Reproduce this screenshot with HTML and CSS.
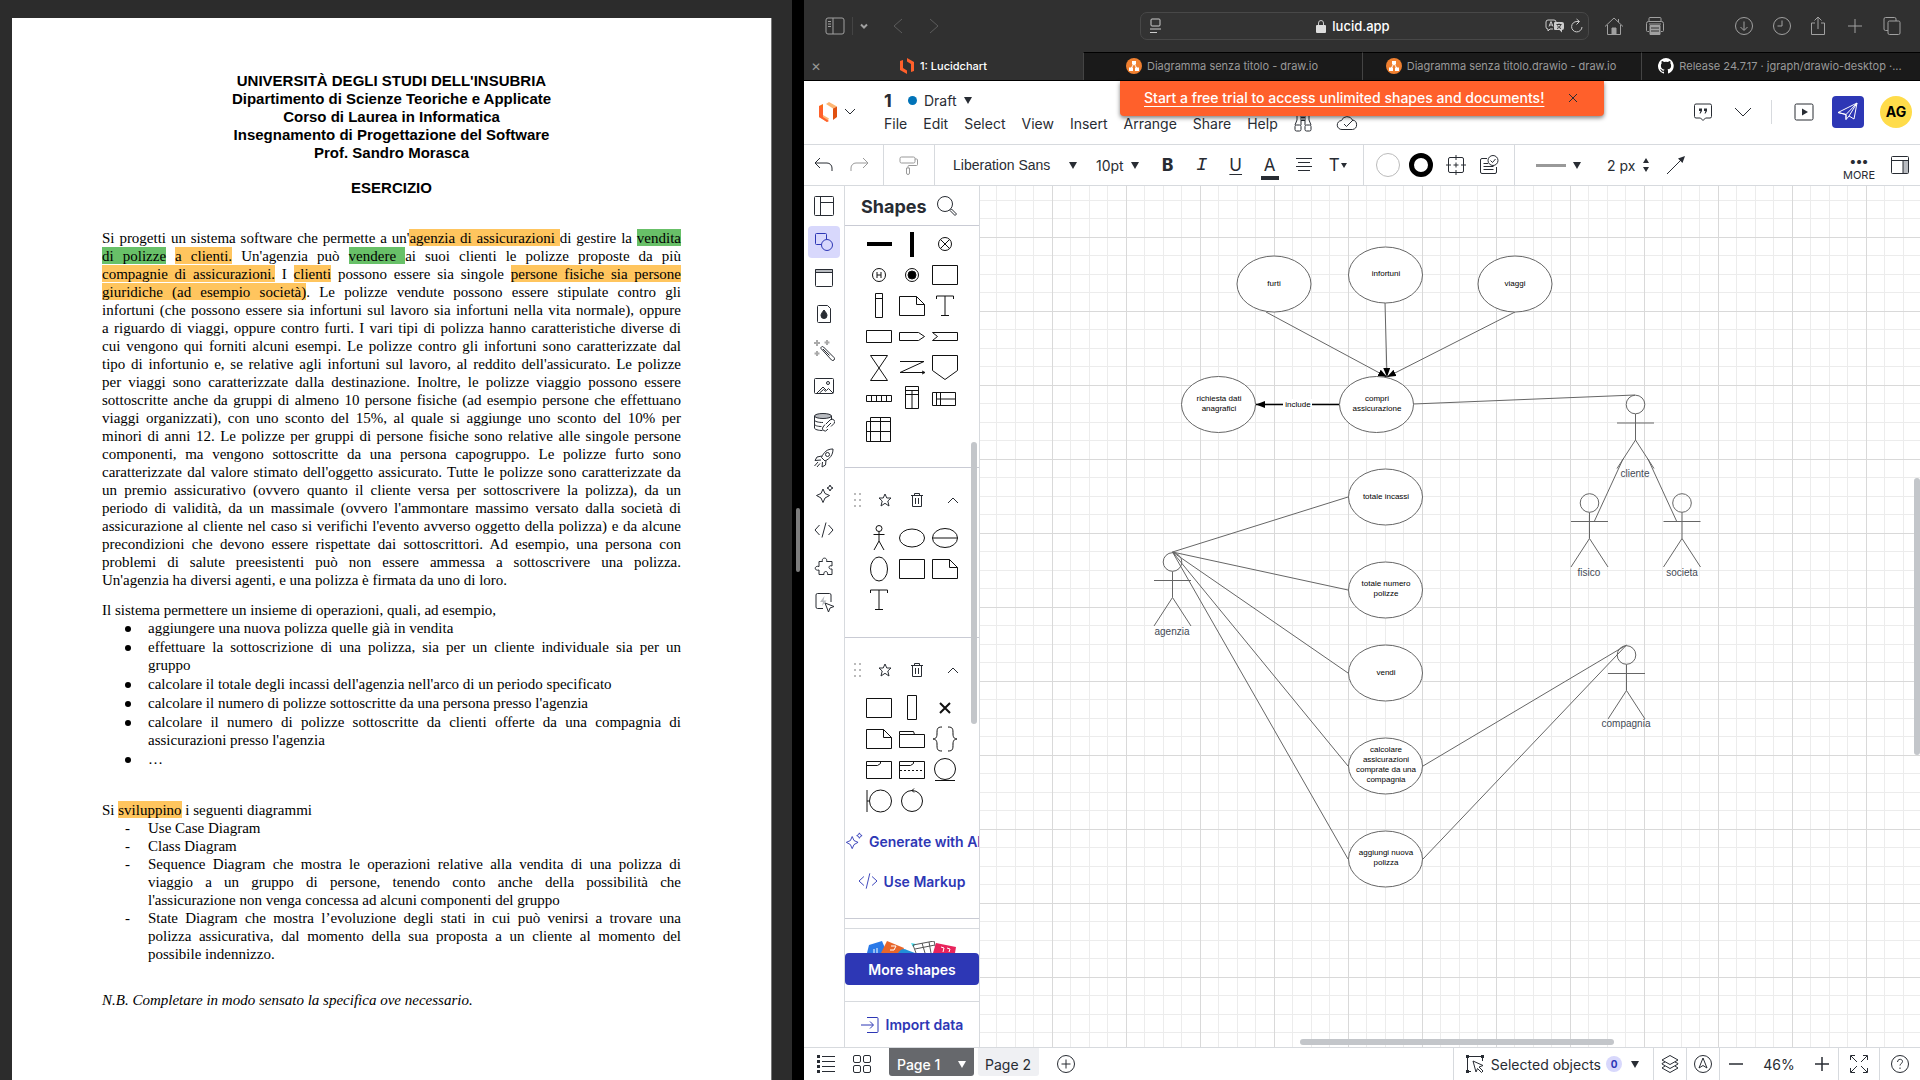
FILE: index.html
```html
<!DOCTYPE html>
<html lang="it">
<head>
<meta charset="utf-8">
<title>1: Lucidchart</title>
<link rel="stylesheet" href="styles.css">
</head>
<body>
<section class="viewer" aria-label="Documento">
  <article class="sheet">
    <header class="doc-head">
      <h1>UNIVERSITÀ DEGLI STUDI DELL'INSUBRIA<br>Dipartimento di Scienze Teoriche e Applicate<br>Corso di Laurea in Informatica<br>Insegnamento di Progettazione del Software<br>Prof. Sandro Morasca</h1>
      <h2>ESERCIZIO</h2>
    </header>
    <p class="justified">Si progetti un sistema software che permette a un'<mark>agenzia di assicurazioni </mark>di gestire la <mark class="green">vendita</mark><br>
      <mark class="green">di polizze</mark> <mark>a clienti.</mark> Un'agenzia può <mark class="green">vendere </mark>ai suoi clienti le polizze proposte da più<br>
      <mark>compagnie di assicurazioni.</mark> I <mark>clienti</mark> possono essere sia singole <mark>persone fisiche sia persone</mark><br>
      <mark>giuridiche (ad esempio società)</mark>. Le polizze vendute possono essere stipulate contro gli<br>
      infortuni (che possono essere sia infortuni sul lavoro sia infortuni nella vita normale), oppure<br>
      a riguardo di viaggi, oppure contro furti. I vari tipi di polizza hanno caratteristiche diverse di<br>
      cui vengono qui forniti alcuni esempi. Le polizze contro gli infortuni sono caratterizzate dal<br>
      tipo di infortunio e, se relative agli infortuni sul lavoro, al reddito dell'assicurato. Le polizze<br>
      per viaggi sono caratterizzate dalla destinazione. Inoltre, le polizze viaggio possono essere<br>
      sottoscritte anche da gruppi di almeno 10 persone fisiche (ad esempio persone che effettuano<br>
      viaggi organizzati), con uno sconto del 15%, al quale si aggiunge uno sconto del 10% per<br>
      minori di anni 12. Le polizze per gruppi di persone fisiche sono relative alle singole persone<br>
      componenti, ma vengono sottoscritte da una persona capogruppo. Le polizze furto sono<br>
      caratterizzate dal valore stimato dell'oggetto assicurato. Tutte le polizze sono caratterizzate da<br>
      un premio assicurativo (ovvero quanto il cliente versa per sottoscrivere la polizza), da un<br>
      periodo di validità, da un massimale (ovvero l'ammontare massimo versato dalla società di<br>
      assicurazione al cliente nel caso si verifichi l'evento avverso oggetto della polizza) e da alcune<br>
      precondizioni che devono essere rispettate dai sottoscrittori. Ad esempio, una persona con<br>
      problemi di salute preesistenti può non essere ammessa a sottoscrivere una polizza.
      <span class="last">Un'agenzia ha diversi agenti, e una polizza è firmata da uno di loro.</span></p>
    <p class="intro">Il sistema permettere un insieme di operazioni, quali, ad esempio,</p>
    <ul class="dots">
      <li>aggiungere una nuova polizza quelle già in vendita</li>
      <li class="justified">effettuare la sottoscrizione di una polizza, sia per un cliente individuale sia per un <span class="last">gruppo</span></li>
      <li>calcolare il totale degli incassi dell'agenzia nell'arco di un periodo specificato</li>
      <li>calcolare il numero di polizze sottoscritte da una persona presso l'agenzia</li>
      <li class="justified">calcolare il numero di polizze sottoscritte da clienti offerte da una compagnia di <span class="last">assicurazioni presso l'agenzia</span></li>
      <li>…</li>
    </ul>
    <p class="request">Si <mark>sviluppino</mark> i seguenti diagrammi</p>
    <ul class="dashes">
      <li>Use Case Diagram</li>
      <li>Class Diagram</li>
      <li class="justified">Sequence Diagram che mostra le operazioni relative alla vendita di una polizza di<br>viaggio a un gruppo di persone, tenendo conto anche della possibilità che <span class="last">l'assicurazione non venga concessa ad alcuni componenti del gruppo</span></li>
      <li class="justified">State Diagram che mostra l’evoluzione degli stati in cui può venirsi a trovare una<br>polizza assicurativa, dal momento della sua proposta a un cliente al momento del <span class="last">possibile indennizzo.</span></li>
    </ul>
    <p class="note">N.B. Completare in modo sensato la specifica ove necessario.</p>
  </article>
</section>

<div class="splitter" role="separator" aria-orientation="vertical"><span class="grip"></span></div>

<section class="browser" aria-label="Browser">
  <div class="safari-bar">
    <button class="sb-side" aria-label="Sidebar"><svg width="20" height="18" viewBox="0 0 20 18"><rect x="1" y="1" width="18" height="16" rx="2"/><path d="M8 1v16M3 4.500h3M3 7h3M3 9.500h3"/></svg></button>
    <button class="sb-menu" aria-label="Tab groups"><svg width="10" height="8" viewBox="0 0 10 8"><path d="M2 2.500l3 3 3-3" stroke-width="2"/></svg></button>
    <button class="sb-back" aria-label="Back"><svg width="12" height="18" viewBox="0 0 12 18"><path d="M10 2L2 9l8 7"/></svg></button>
    <button class="sb-back" aria-label="Forward"><svg width="12" height="18" viewBox="0 0 12 18"><path d="M2 2l8 7-8 7"/></svg></button>
    <div class="address">
      <svg width="12" height="16" viewBox="0 0 12 16"><rect x="2" y="1" width="9" height="7" rx="1"/><path d="M1 11h11M1 14.500h7"/></svg>
      <div class="host">
        <svg width="10" height="14" viewBox="0 0 10 14"><rect x="0" y="6" width="10" height="8" rx="1" fill="#ddd" stroke="none"/><path d="M2.500 6V4a2.500 2.500 0 015 0v2"/></svg>
        <span>lucid.app</span>
      </div>
      <svg width="20" height="14" viewBox="0 0 20 14"><path d="M8 10H5l-2 2v-2a2 2 0 01-2-2V3a2 2 0 012-2h6a2 2 0 012 2M4 7.500l2-5 2 5M4.500 6h3" stroke-width="1"/><path d="M10 3h7a2 2 0 012 2v4a2 2 0 01-2 2v2.500L14.500 11H10a1 1 0 01-1-1V4a1 1 0 011-1z" fill="#ccc" stroke="none"/><path class="cut" d="M11.500 5.500h5M14 4.500v1M12 9.500c2-.7 3.300-2 3.700-4M12.500 6.500c.7 1.500 2 2.500 3.500 3"/></svg>
      <svg width="14" height="16" viewBox="0 0 14 16"><path d="M12 9a5.200 5.200 0 11-5-5.500h2M6.500 1l3 2.500-3 3"/></svg>
    </div>
    <button class="sb-home" aria-label="Home"><svg width="20" height="20" viewBox="0 0 20 20"><path d="M1 10.500L10 2l9 8.500M3.500 9v9.500h13V9M14.500 3v3"/><path d="M8 12h4v6H8z" fill="#a0a0a0"/></svg></button>
    <button class="sb-print" aria-label="Print"><svg width="20" height="20" viewBox="0 0 20 20"><path d="M4 5.500V2.500a1 1 0 011-1h10a1 1 0 011 1v3M4 15.500H2.500a1 1 0 01-1-1v-7a2 2 0 012-2h13a2 2 0 012 2v7a1 1 0 01-1 1H16M4 8h12"/><path d="M5 9.500h10v9H5z" fill="#a0a0a0"/><path class="cut" d="M6 12h8M6 15h8"/></svg></button>
    <button class="sb-down" aria-label="Downloads"><svg width="20" height="20" viewBox="0 0 20 20"><circle cx="10" cy="10" r="8.500"/><path d="M10 5.500v8.500M6.500 11l3.500 3.500 3.500-3.500"/></svg></button>
    <button class="sb-clock" aria-label="History"><svg width="20" height="20" viewBox="0 0 20 20"><circle cx="10" cy="10" r="8.500"/><path d="M10 4.500V10H5.500"/></svg></button>
    <button class="sb-share" aria-label="Share"><svg width="16" height="20" viewBox="0 0 16 20"><path d="M5 7H1.500v11.500h13V7H11M8 13V1.500M4.500 4.500L8 1l3.500 3.500"/></svg></button>
    <button class="sb-plus" aria-label="New tab"><svg width="14" height="14" viewBox="0 0 14 14"><path d="M7 0v14M0 7h14"/></svg></button>
    <button class="sb-tabs" aria-label="Show all tabs"><svg width="18" height="20" viewBox="0 0 18 20"><path d="M5 14.500H2.500a1.500 1.500 0 01-1.500-1.500V3a1.500 1.500 0 011.500-1.500h9A1.500 1.500 0 0113 3v2"/><rect x="5" y="5" width="12" height="13.500" rx="1.500"/></svg></button>
  </div>

  <nav class="tabs" aria-label="Tabs">
    <a class="tab active" href="#lucid"><span class="tab-close">✕</span>
      <svg width="16" height="16" viewBox="0 0 16 16"><path d="M1 3l3-1v8l4 2.500V16L1 12zM8 0l7 4v9l-3 1V6L8 3.500z" fill="#ff602b"/></svg>1: Lucidchart</a>
    <a class="tab" href="#drawio"><svg width="16" height="16" viewBox="0 0 16 16"><circle cx="8" cy="8" r="8" fill="#f08030"/><path d="M8 5.500L5 10.500M8 5.500l3 5" stroke="#fff"/><path d="M6 3h4v3.500H6zM3 9.500h4v3.500H3zM9 9.500h4v3.500H9z" fill="#fff"/></svg>Diagramma senza titolo - draw.io</a>
    <a class="tab" href="#drawio2"><svg width="16" height="16" viewBox="0 0 16 16"><circle cx="8" cy="8" r="8" fill="#f08030"/><path d="M8 5.500L5 10.500M8 5.500l3 5" stroke="#fff"/><path d="M6 3h4v3.500H6zM3 9.500h4v3.500H3zM9 9.500h4v3.500H9z" fill="#fff"/></svg>Diagramma senza titolo.drawio - draw.io</a>
    <a class="tab" href="#github"><svg width="16" height="16" viewBox="0 0 16 16"><path fill="#fff" d="M8 0a8 8 0 00-2.500 15.600c.4.100.5-.2.500-.4v-1.500c-2.200.5-2.700-1-2.700-1-.4-.9-.9-1.200-.9-1.200-.7-.5.100-.5.100-.5.800.1 1.200.8 1.200.8.700 1.300 1.900.9 2.300.7.100-.5.300-.9.500-1.100-1.800-.2-3.600-.9-3.600-4 0-.9.300-1.600.8-2.200-.1-.2-.4-1 .1-2.100 0 0 .7-.2 2.200.8a7.700 7.700 0 014 0c1.500-1 2.200-.8 2.200-.8.400 1.100.2 1.900.1 2.100.5.600.8 1.300.8 2.200 0 3.100-1.900 3.700-3.600 4 .3.200.5.700.5 1.500v2.200c0 .2.100.5.500.4A8 8 0 008 0z"/></svg><span>Release 24.7.17 · jgraph/drawio-desktop ·...</span></a>
  </nav>

  <main class="app">
    <a class="banner" href="#trial"><span>Start a free trial to access unlimited shapes and documents!</span>
      <svg width="10" height="10" viewBox="0 0 10 10"><path d="M1 1l8 8M9 1L1 9"/></svg></a>
    <header class="app-head">
      <button class="logo" aria-label="Lucid home"><svg width="20" height="22" viewBox="0 0 20 22"><path d="M1 5l4-2v11l-4 2z" fill="#f96b13"/><path d="M1 16l4-2 6 3.500L9 21z" fill="#fdb572"/><path d="M8 3l3-2 8 4.500-4 2z" fill="#fdb572"/><path d="M15 7.500l4-2V16l-4 3z" fill="#e05010"/><path d="M1 5l4 2v9l6 4-2 1-8-5z" fill="#ff602b"/></svg>
        <svg width="12" height="8" viewBox="0 0 12 8"><path d="M1 1l5 5 5-5"/></svg></button>
      <div class="titles">
        <div class="doc-title"><strong>1</strong><i class="dot"></i><span>Draft</span><i class="caret"></i></div>
        <nav class="menu" aria-label="Menu">
          <button>File</button><button>Edit</button><button>Select</button><button>View</button><button>Insert</button><button>Arrange</button><button>Share</button><button>Help</button>
          <button aria-label="Find"><svg width="18" height="18" viewBox="0 0 18 18"><path d="M3 1h4v4M11 5V1h4M7 3.500h4M7 6.500h4M3 1v5L1 11M15 1v5l2 5M7 5v6M11 5v6M9 1v6"/><rect x="1" y="11" width="6" height="6" rx="1.500"/><rect x="11" y="11" width="6" height="6" rx="1.500"/></svg></button>
          <button class="cloud" aria-label="Saved"><svg width="22" height="16" viewBox="0 0 22 16"><path d="M6 14.500a4.500 4.500 0 01-.5-9A6 6 0 0116.500 5a4.800 4.800 0 010 9.500zM8 9l2.500 2.500L17 5"/></svg></button>
        </nav>
      </div>
      <div class="head-right">
        <button aria-label="Comments"><svg width="20" height="20" viewBox="0 0 20 20"><path d="M3 2h14a1.500 1.500 0 011.500 1.500v11A1.500 1.500 0 0117 16h-4.500L10 18.500 7.500 16H3a1.500 1.500 0 01-1.500-1.500v-11A1.500 1.500 0 013 2z"/><path d="M6 6.500h3v2.500l-1.500 2.500H6.500L7.500 9H6zM11 6.500h3v2.500l-1.500 2.500H11.500l1-2.500H11z" fill="#282c33" stroke="none"/></svg></button>
        <button class="more-down" aria-label="Expand"><svg width="18" height="10" viewBox="0 0 18 10"><path d="M1 1l8 8 8-8"/></svg></button>
        <i class="rule"></i>
        <button class="present" aria-label="Present"><svg width="20" height="18" viewBox="0 0 20 18"><rect x="1" y="1" width="18" height="16" rx="1.500"/><path d="M8 5.500l6 3.500-6 3.500z" fill="#282c33" stroke="none"/></svg></button>
        <button class="send" aria-label="Share document"><svg width="22" height="22" viewBox="0 0 22 22"><path d="M1 11.500L20 2l-3 16-5-3-3 3.500v-5zM9 13.500L20 2M9 18.500v-5M12 15L20 2M1 11.500l8 2"/></svg></button>
        <button class="avatar">AG</button>
      </div>
    </header>

    <div class="toolbar" role="toolbar">
      <div class="group g-undo">
        <button aria-label="Undo"><svg width="20" height="18" viewBox="0 0 20 18"><path d="M6 2L1 7l5 5M1 7h12a5 5 0 015 5v3"/></svg></button>
        <button class="faded" aria-label="Redo"><svg width="20" height="18" viewBox="0 0 20 18"><path d="M14 2l5 5-5 5M19 7H7a5 5 0 00-5 5v3"/></svg></button>
      </div>
      <div class="group g-paint"><button class="faded" aria-label="Format painter"><svg width="20" height="20" viewBox="0 0 20 20"><rect x="1" y="2" width="15" height="6" rx="1.500"/><path d="M16 4h1.500a1 1 0 011 1v4.500a1 1 0 01-1 1H10a1 1 0 00-1 1V13M7.500 13h3v5a1 1 0 01-3 0z"/></svg></button></div>
      <div class="group g-text">
        <button class="font-name">Liberation Sans<i class="caret"></i></button>
        <button class="font-size">10pt<i class="caret"></i></button>
        <button class="glyph bold">B</button>
        <button class="glyph italic">I</button>
        <button class="glyph underline">U</button>
        <button class="glyph colour">A</button>
        <button aria-label="Align"><svg width="18" height="16" viewBox="0 0 18 16"><path d="M1 1.500h16M3 5.500h12M1 9.500h16M3 13.500h12"/></svg></button>
        <button class="glyph tt">T<i class="caret small"></i></button>
      </div>
      <div class="group g-fill">
        <button aria-label="Fill colour"><svg width="24" height="24" viewBox="0 0 24 24"><circle cx="12" cy="12" r="11.500" stroke="#bbb"/></svg></button>
        <button aria-label="Line colour"><svg width="24" height="24" viewBox="0 0 24 24"><circle cx="12" cy="12" r="9.500" stroke="#000" stroke-width="5"/></svg></button>
        <button aria-label="Spacing"><svg width="20" height="20" viewBox="0 0 20 20"><rect x="2.500" y="2.500" width="15" height="15" rx="1.500"/><path d="M10 0v5M10 15v5M0 10h5M15 10h5M10 7.500v5M7.500 10h5"/></svg></button>
        <button aria-label="Tasks"><svg width="20" height="20" viewBox="0 0 20 20"><path d="M8 3.500H3A1.500 1.500 0 001.500 5v12A1.500 1.500 0 003 18.500h13a1.500 1.500 0 001.500-1.500v-5M4.500 8.500H9M4.500 11.500h10M4.500 14.500h10"/><circle cx="14" cy="5.500" r="5"/><path d="M11.500 5.500l2 2 3-3.500"/></svg></button>
      </div>
      <div class="group g-line">
        <button class="line-style" aria-label="Line style"><i class="stroke"></i><i class="caret"></i></button>
        <label class="width"><input type="text" value="2 px" aria-label="Line width"><svg width="8" height="14" viewBox="0 0 8 14"><path d="M4 0l3 5H1zM4 14l3-5H1z" fill="#282c33" stroke="none"/></svg></label>
        <button aria-label="Line end"><svg width="20" height="20" viewBox="0 0 20 20"><path d="M1 19L17 3"/><path d="M19 1l-2.500 7-4.500-4.500z" fill="#282c33" stroke="none"/></svg></button>
      </div>
      <button class="more"><b>•••</b>MORE</button>
      <button class="dock" aria-label="Panel"><svg width="18" height="18" viewBox="0 0 18 18"><path d="M12 5h5v12h-5z" fill="#b8bbc0" stroke="none"/><rect x=".5" y=".5" width="17" height="17" rx="1"/><path d="M1 4.500h16M12 5v12"/></svg></button>
    </div>

    <div class="workspace">
      <nav class="rail" aria-label="Tools">
        <button aria-label="Templates"><svg width="20" height="20" viewBox="0 0 20 20"><rect x=".5" y=".5" width="19" height="19" rx="1"/><path d="M6.500 1v18M7 6.500h12"/></svg></button>
        <button class="on" aria-label="Shapes"><svg width="20" height="20" viewBox="0 0 20 20"><path d="M7 12.500H2.500a1 1 0 01-1-1v-9a1 1 0 011-1h9a1 1 0 011 1V7"/><circle cx="13" cy="13" r="5.500"/></svg></button>
        <button aria-label="Containers"><svg width="20" height="20" viewBox="0 0 20 20"><path d="M1.500 1.500h17v3h-17z" fill="#b8bbc0"/><rect x="1.500" y="1.500" width="17" height="17" rx="1"/></svg></button>
        <button aria-label="Theme"><svg width="20" height="20" viewBox="0 0 20 20"><path d="M4.500 1.500h9l3 3v14h-12a1 1 0 01-1-1v-15a1 1 0 011-1z"/><path d="M10 6c2 2.500 3 4 3 5.500a3 3 0 01-6 0C7 10 8 8.500 10 6z" fill="#282c33"/></svg></button>
        <button aria-label="Magic"><svg width="22" height="22" viewBox="0 0 22 22"><path d="M4 1v6M1 4h6M14 1v5M11.500 3.500h5M4 12v5M1.500 14.500h5" stroke="#aaa" stroke-width="2"/><path d="M8 9.500a1.500 1.500 0 012.500-1.500L21 18.500a1.500 1.500 0 01-2.500 2.500zM10 10l6.500 6.500"/></svg></button>
        <button aria-label="Images"><svg width="20" height="20" viewBox="0 0 20 20"><rect x=".5" y="2.500" width="19" height="15" rx="1"/><path d="M3 17l6-6 3.500 3.500 2-2L19 17M5.500 17l4-3.500 2.500 2"/><circle cx="14" cy="7" r="1.500"/></svg></button>
        <button aria-label="Data"><svg width="22" height="22" viewBox="0 0 22 22"><ellipse cx="10" cy="5" rx="8.500" ry="2.500" fill="#b8bbc0"/><path d="M1.500 5v12c0 1.500 4 2.500 8 2.500M18.500 5v4M1.500 9c0 1.500 4 2.500 8.500 2.500M1.500 13c0 1.500 3 2.500 7 2.500M13 13l4-4a2.500 2.500 0 014 3.500l-3 3M18 12l-4.500 4.500M15 18l-1 1a2.500 2.500 0 01-4-3l2-2.500"/></svg></button>
        <button aria-label="Launch"><svg width="20" height="20" viewBox="0 0 20 20"><path d="M19 1c-6 0-9 3-11.500 8.500L11 13c5-2.500 8-6 8-12zM8 8L3 9l-2 3.500 6-.5M12 12.500l-.5 4.500L8 19l.500-5M4 14l-3.500 4M6 15.500L3 19"/><circle cx="13.500" cy="6.500" r="2"/></svg></button>
        <button aria-label="AI"><svg width="20" height="20" viewBox="0 0 20 20"><path d="M9 5l2 4.500 4.500 2L11 14l-2 4.500L7 14l-4.500-2.500L7 9.500zM16 1l1 2 2 1-2 1-1 2-1-2-2-1 2-1z"/></svg></button>
        <button aria-label="Code"><svg width="20" height="20" viewBox="0 0 20 20"><path d="M5.500 5L1 10l4.500 5M14.500 5l4.500 5-4.500 5M12 2.500L8 17.500"/></svg></button>
        <button aria-label="Plugins"><svg width="20" height="20" viewBox="0 0 20 20"><path d="M5 5.500h3.500C7 1 14 1 12.500 5.500H18V10c-4-1.500-4 4 0 3v5.500h-4.500c1-4-4.500-4-3.500 0H5V14c-5 1.500-5-5 0-3.500z"/></svg></button>
        <button aria-label="Actions"><svg width="22" height="22" viewBox="0 0 22 22"><path d="M10 17.500H4.500A1.500 1.500 0 013 16V4a1.500 1.500 0 011.500-1.500h12A1.500 1.500 0 0118 4v7"/><path d="M11.500 5L7 11h3l-1 4 4.500-5.500h-3z" fill="#b8bbc0" stroke="none"/><path d="M12 12l9 3.500-4 1.500-1.500 4z" fill="#fff"/></svg></button>
      </nav>

      <aside class="panel">
        <div class="panel-title"><h3>Shapes</h3><button aria-label="Search shapes"><svg width="22" height="22" viewBox="0 0 22 22"><circle cx="9" cy="9" r="7.500"/><path d="M14 15.500l1.500-1.500 5 5-1.500 1.500z"/></svg></button></div>
        <div class="scroller">
          <div class="section first">
            <div class="tiles">
              <button aria-label="Join"><svg viewBox="-16 -15 33 31"><path d="M-12 0h25" stroke="#000" stroke-width="4"/></svg></button>
              <button aria-label="Fork"><svg viewBox="-16 -15 33 31"><path d="M0-12v25" stroke="#000" stroke-width="4"/></svg></button>
              <button aria-label="Flow end"><svg viewBox="-16 -15 33 31"><circle r="6.500"/><path d="M-4.500-4.500l9 9M4.500-4.500l-9 9"/></svg></button>
              <button aria-label="History"><svg viewBox="-16 -15 33 31"><circle r="6.500"/><path d="M-2-3v6M2-3v6M-2 0h4"/></svg></button>
              <button aria-label="Final"><svg viewBox="-16 -15 33 31"><circle r="6.500"/><circle r="4" fill="#000"/></svg></button>
              <button aria-label="State"><svg viewBox="-16 -15 33 31"><path d="M-12.500-9.500h25v19h-25z"/></svg></button>
              <button aria-label="Activation"><svg viewBox="-16 -15 33 31"><path d="M-3.500-12.500h7v24h-7zM-3.500-7.500h7"/></svg></button>
              <button aria-label="Note"><svg viewBox="-16 -15 33 31"><path d="M-12.500-9.500h17l8 8v11h-25zM4.500-9.500v8h8"/></svg></button>
              <button aria-label="Text"><svg viewBox="-16 -15 33 31"><path d="M-8.500-7v-3h17v3M0-10v19.500M-4 9.500h8"/></svg></button>
              <button aria-label="Action"><svg viewBox="-16 -15 33 31"><path d="M-12.500-6.500h25v12h-25z"/></svg></button>
              <button aria-label="Send signal"><svg viewBox="-16 -15 33 31"><path d="M-12.500-4.500h19l6 4-6 4h-19z"/></svg></button>
              <button aria-label="Receive signal"><svg viewBox="-16 -15 33 31"><path d="M-12.500-4.500h25v8h-25l5-4z"/></svg></button>
              <button aria-label="Time event"><svg viewBox="-16 -15 33 31"><path d="M-8.500-12.500h17l-17 25h17z"/></svg></button>
              <button aria-label="Interrupt"><svg viewBox="-16 -15 33 31"><path d="M-12-6.500h24l-24 11h24M10 3l3 1.500L10 6"/></svg></button>
              <button aria-label="Off-page"><svg viewBox="-16 -15 33 31"><path d="M-12.500-12.500h25v15l-12.500 9-12.500-9z"/></svg></button>
              <button aria-label="Band"><svg viewBox="-16 -15 33 31"><path d="M-12.500-3.500h25v6h-25zM-7.500-3.500v6M-2.500-3.500v6M2.500-3.500v6M7.500-3.500v6"/></svg></button>
              <button aria-label="Swimlane"><svg viewBox="-16 -15 33 31"><path d="M-6.500-12.500h13v22h-13zM-6.500-8.500h13M-6.500-4.500h13M0-8.500v18"/></svg></button>
              <button aria-label="Horizontal lane"><svg viewBox="-16 -15 33 31"><path d="M-12.500-6.500h23v13h-23zM-8.500-6.500v13M-4.500-6.500v13M-8.500 0h19"/></svg></button>
              <button aria-label="Grid"><svg viewBox="-16 -15 33 31"><path d="M-12.500-8.500h24v20h-24zM-8.500-12.500h20v24h-20zM1.500-12.500v24M-12.500 1.500h24"/></svg></button>
            </div>
          </div>
          <div class="section">
            <div class="section-head">
              <svg width="8" height="14" viewBox="0 0 8 14"><path d="M0 1h2M5 1h2M0 7h2M5 7h2M0 13h2M5 13h2" stroke="#bbb" stroke-width="2"/></svg>
              <button aria-label="Pin"><svg width="14" height="14" viewBox="0 0 14 14"><path d="M7 1l1.800 4H13l-3.200 3L11 13 7 10.300 3 13l1.200-5L1 5h4.200z"/></svg></button>
              <button aria-label="Remove"><svg width="12" height="14" viewBox="0 0 12 14"><path d="M0 2.500h12M3.500 2.500v-2h5v2M1.500 2.500v11h9v-11M4.500 5v6M7.500 5v6"/></svg></button>
              <button aria-label="Collapse"><svg width="10" height="6" viewBox="0 0 10 6"><path d="M0 6l5-5 5 5"/></svg></button>
            </div>
            <div class="tiles">
              <button aria-label="Actor"><svg viewBox="-16 -15 33 31"><circle cy="-9.500" r="3"/><path d="M0-6.500V3L-5 12M0 3l5 9M-5.500-3.500h11"/></svg></button>
              <button aria-label="Use case"><svg viewBox="-16 -15 33 31"><ellipse rx="12.500" ry="9"/></svg></button>
              <button aria-label="Divided use case"><svg viewBox="-16 -15 33 31"><ellipse rx="12.500" ry="9.500"/><path d="M-12.500 0h25"/></svg></button>
              <button aria-label="Ellipse"><svg viewBox="-16 -15 33 31"><ellipse rx="8.500" ry="12"/></svg></button>
              <button aria-label="System"><svg viewBox="-16 -15 33 31"><path d="M-12.500-9.500h25v19h-25z"/></svg></button>
              <button aria-label="Note"><svg viewBox="-16 -15 33 31"><path d="M-12.500-9.500h17l8 8v11h-25zM4.500-9.500v8h8"/></svg></button>
              <button aria-label="Text"><svg viewBox="-16 -15 33 31"><path d="M-8.500-7v-3h17v3M0-10v19.500M-4 9.500h8"/></svg></button>
            </div>
          </div>
          <div class="section">
            <div class="section-head">
              <svg width="8" height="14" viewBox="0 0 8 14"><path d="M0 1h2M5 1h2M0 7h2M5 7h2M0 13h2M5 13h2" stroke="#bbb" stroke-width="2"/></svg>
              <button aria-label="Pin"><svg width="14" height="14" viewBox="0 0 14 14"><path d="M7 1l1.800 4H13l-3.200 3L11 13 7 10.300 3 13l1.200-5L1 5h4.200z"/></svg></button>
              <button aria-label="Remove"><svg width="12" height="14" viewBox="0 0 12 14"><path d="M0 2.500h12M3.500 2.500v-2h5v2M1.500 2.500v11h9v-11M4.500 5v6M7.500 5v6"/></svg></button>
              <button aria-label="Collapse"><svg width="10" height="6" viewBox="0 0 10 6"><path d="M0 6l5-5 5 5"/></svg></button>
            </div>
            <div class="tiles">
              <button aria-label="Object"><svg viewBox="-16 -15 33 31"><path d="M-12.500-9.500h25v19h-25z"/></svg></button>
              <button aria-label="Lifeline"><svg viewBox="-16 -15 33 31"><path d="M-4.500-12.500h9v24h-9z"/></svg></button>
              <button aria-label="Destroy"><svg viewBox="-16 -15 33 31"><path class="heavy" d="M-5-5L5 5M5-5L-5 5"/></svg></button>
              <button aria-label="Note"><svg viewBox="-16 -15 33 31"><path d="M-12.500-9.500h17l8 8v11h-25zM4.500-9.500v8h8"/></svg></button>
              <button aria-label="Package"><svg viewBox="-16 -15 33 31"><path d="M-12.500-4.500h25v13h-25zM-12.500-4.500v-3h14l1 3"/></svg></button>
              <button aria-label="Braces"><svg viewBox="-16 -15 33 31"><path d="M-3-12c-5 0-5 2-5 7 0 4-2 5-4 5 2 0 4 1 4 5 0 5 0 7 5 7M3-12c5 0 5 2 5 7 0 4 2 5 4 5-2 0-4 1-4 5 0 5 0 7-5 7"/></svg></button>
              <button aria-label="Frame"><svg viewBox="-16 -15 33 31"><path d="M-12.500-8.500h25v17h-25zM-12.500-4.500h11l3-2v-2"/></svg></button>
              <button aria-label="Alternative"><svg viewBox="-16 -15 33 31"><path d="M-12.500-8.500h25v17h-25zM-12.500-4.500h11l3-2v-2"/><path d="M-12 .5h24" stroke-dasharray="2 2"/></svg></button>
              <button aria-label="Entity"><svg viewBox="-16 -15 33 31"><circle cy="-1" r="10.500"/><path d="M-10 10.500h20"/></svg></button>
              <button aria-label="Boundary"><svg viewBox="-16 -15 33 31"><circle cx="1.500" r="11"/><path d="M-12-11v22M-12 0h2"/></svg></button>
              <button aria-label="Control"><svg viewBox="-16 -15 33 31"><circle r="10.500"/><path d="M2-12.500l-2 2 2 2"/></svg></button>
            </div>
            <button class="link ai"><svg width="18" height="18" viewBox="0 0 20 20"><path d="M8 5l2 4.500 4.500 2L10 14l-2 4.500L6 14l-4.500-2.500L6 9.500zM16 1l1 2 2 1-2 1-1 2-1-2-2-1 2-1z"/></svg>Generate with AI</button>
            <button class="link"><svg width="18" height="18" viewBox="0 0 20 20"><path d="M5.500 5L0 10l5.500 5M14.500 5l5.500 5-5.500 5M12 1.500L8 18.500"/></svg>Use Markup</button>
          </div>
          <div class="thumb v-panel"></div>
        </div>
        <div class="panel-foot">
          <svg class="fan" width="90" height="12" viewBox="0 0 90 12"><path d="M2 4l13-4 5 12H0z" fill="#2a7ae8"/><path d="M7 8v4M10 7v5" stroke="#fff"/><path d="M20 0l17 7-2 5H14z" fill="#e8662a"/><path d="M24 5h5l-2 4h-4" stroke="#fff"/><path d="M31 12q4-6 9-3l8 3z" fill="#2090d8"/><path d="M44 2l5 1-3 3z" fill="#3de0f0"/><path d="M46 4l21-4 3 12M46 4l3 8M48 8l20-4M55 2l3 10M62 1l2 11" stroke="#555"/><path d="M69 2l20 4-1 6H66z" fill="#e8245c"/><path d="M74 6l3 1-1 4M80 7l3 1-1 3" stroke="#fff"/></svg>
          <button class="more-shapes">More shapes</button>
        </div>
        <button class="link import"><svg width="18" height="18" viewBox="0 0 18 18"><path d="M6 1.500h10a1 1 0 011 1v13a1 1 0 01-1 1H6M0 9h12M9 5.500L12.500 9 9 12.500"/></svg>Import data</button>
      </aside>

      <div class="canvas">
        <svg class="diagram" width="100%" height="100%">
          <defs>
            <marker id="tip" viewBox="0 0 9 7" refX="9" refY="3.500" markerWidth="9" markerHeight="7" markerUnits="userSpaceOnUse" orient="auto"><path d="M0 0l9 3.500L0 7z" fill="#000" stroke="none"/></marker>
            <g id="actor"><circle r="9.300"/><path d="M0 9.500v26M-18.500 18.500h37M-18.500 64L0 35.500 18.500 64"/></g>
          </defs>
          <g class="edges">
            <path d="M286 126L407 191" marker-end="url(#tip)"/>
            <path d="M405 117L407 191" marker-end="url(#tip)"/>
            <path d="M535 126L407 191" marker-end="url(#tip)"/>
            <path class="strong" d="M359 218.500H276" marker-end="url(#tip)"/>
            <path d="M433 218L655 209"/>
            <path d="M614 336L643 273M697 336L668 273"/>
            <path d="M368 311L192.500 366L368 404M368 487L192.500 366L368 580M192.500 366L368 673"/>
            <path d="M443 580L646.500 459L443 673"/>
          </g>
          <g class="nodes">
            <ellipse cx="294" cy="98" rx="37" ry="28"/><ellipse cx="405.500" cy="89" rx="37" ry="28"/><ellipse cx="535" cy="98" rx="37" ry="28"/>
            <ellipse cx="238.500" cy="218.500" rx="37" ry="28"/><ellipse cx="396.500" cy="218.500" rx="37" ry="28"/>
            <ellipse cx="405.500" cy="311" rx="37" ry="28"/><ellipse cx="405.500" cy="404" rx="37" ry="28"/><ellipse cx="405.500" cy="487" rx="37" ry="28"/><ellipse cx="405.500" cy="580" rx="37" ry="28"/><ellipse cx="405.500" cy="673" rx="37" ry="28"/>
          </g>
          <g class="actors">
            <use href="#actor" x="655.500" y="218.500"/><use href="#actor" x="609.500" y="317"/><use href="#actor" x="702" y="317"/><use href="#actor" x="192.500" y="376"/><use href="#actor" x="646.500" y="469"/>
          </g>
          <rect x="303" y="213" width="29" height="10" fill="#fff" stroke="none"/>
          <g class="labels">
            <text x="294" y="100">furti</text><text x="406" y="90">infortuni</text><text x="535" y="100">viaggi</text>
            <text x="239" y="215">richiesta dati<tspan x="239" dy="10">anagrafici</tspan></text>
            <text x="397" y="215">compri<tspan x="397" dy="10">assicurazione</tspan></text>
            <text x="318" y="221">include</text>
            <text x="406" y="313">totale incassi</text>
            <text x="406" y="400">totale numero<tspan x="406" dy="10">polizze</tspan></text>
            <text x="406" y="489">vendi</text>
            <text x="406" y="566">calcolare<tspan x="406" dy="10">assicurazioni</tspan><tspan x="406" dy="10">comprate da una</tspan><tspan x="406" dy="10">compagnia</tspan></text>
            <text x="406" y="669">aggiungi nuova<tspan x="406" dy="10">polizza</tspan></text>
          </g>
          <g class="labels roles">
            <text x="655" y="291">cliente</text><text x="609" y="390">fisico</text><text x="702" y="390">societa</text><text x="192" y="449">agenzia</text><text x="646" y="541">compagnia</text>
          </g>
        </svg>
        <div class="thumb v-canvas"></div>
        <div class="thumb h-canvas"></div>
      </div>
    </div>

    <footer class="status">
      <button class="st-list" aria-label="Page list"><svg width="18" height="18" viewBox="0 0 18 18"><path d="M5 1.500h13M5 6.500h13M5 11.500h13M5 16.500h13"/><path d="M0 1.500h3M0 6.500h3M0 11.500h3M0 16.500h3" stroke-width="3"/></svg></button>
      <button class="st-grid" aria-label="Page grid"><svg width="18" height="18" viewBox="0 0 18 18"><rect x=".5" y=".5" width="7" height="7" rx="1.500"/><rect x="10.500" y=".5" width="7" height="7" rx="1.500"/><rect x=".5" y="10.500" width="7" height="7" rx="1.500"/><rect x="10.500" y="10.500" width="7" height="7" rx="1.500"/></svg></button>
      <button class="page current">Page 1<i class="caret"></i></button>
      <button class="page">Page 2</button>
      <button class="st-add" aria-label="Add page"><svg width="18" height="18" viewBox="0 0 18 18"><circle cx="9" cy="9" r="8.500"/><path d="M9 4.500v9M4.500 9h9"/></svg></button>
      <button class="selected"><svg width="18" height="18" viewBox="0 0 18 18"><path d="M5 16.500H1.500v-15h15V6"/><path d="M0 0h3v3H0zM15 0h3v3h-3zM0 15h3v3H0z" fill="#282c33" stroke="none"/><path d="M7 6l10 4.500-4 1.500 4 4-1.500 1.500-4-4-1.500 3.500z"/></svg>Selected objects<span class="badge">0</span><i class="caret"></i></button>
      <button class="cell" aria-label="Layers"><svg width="18" height="18" viewBox="0 0 18 18"><path d="M9 .5l8 4.500-8 4.500L1 5zM1 8.500V9l8 4.500L17 9v-.5L14 7M4 7L1 8.500M4 11l-3 2 8 4.500 8-4.500-3-2"/></svg></button>
      <button class="cell" aria-label="Accessibility"><svg width="18" height="18" viewBox="0 0 18 18"><circle cx="9" cy="9" r="8.500"/><path d="M9 3l4 10-4-2.500L5 13z"/></svg></button>
      <div class="zoom">
        <button aria-label="Zoom out"><svg width="14" height="14" viewBox="0 0 14 14"><path d="M0 7h14" stroke-width="1.500"/></svg></button>
        <span>46%</span>
        <button aria-label="Zoom in"><svg width="14" height="14" viewBox="0 0 14 14"><path d="M0 7h14M7 0v14" stroke-width="1.500"/></svg></button>
      </div>
      <button class="cell wide" aria-label="Full screen"><svg width="18" height="18" viewBox="0 0 18 18"><path d="M.5 5V.5H5M13 .5h4.500V5M17.500 13v4.500H13M5 17.500H.5V13M1 1l6 6M17 1l-6 6M1 17l6-6M17 17l-6-6"/></svg></button>
      <button class="cell wide" aria-label="Help"><svg width="18" height="18" viewBox="0 0 18 18"><circle cx="9" cy="9" r="8.500"/><path d="M6.500 7c0-3.500 5-3.500 5-.5 0 2-2.500 2-2.500 4M9 12.500v1.500"/></svg></button>
    </footer>
  </main>
</section>
</body>
</html>
```
FILE: styles.css
```css
* { box-sizing: border-box; }
body {
  margin: 0;
  height: 100vh;
  display: grid;
  grid-template-columns: 792fr 12px 1116fr;
  grid-template-rows: 100vh;
  overflow: hidden;
  background: #000;
  font-family: Inter, "Liberation Sans", sans-serif;
  font-size: 14px;
  color: #282c33;
}
button, input {
  font: inherit;
  color: inherit;
  background: none;
  border: 0;
  padding: 0;
  margin: 0;
}
button { display: flex; align-items: center; justify-content: center; flex: none; white-space: nowrap; }
a { color: inherit; text-decoration: none; }
svg { display: block; flex: none; fill: none; stroke: #282c33; stroke-width: 1; }

/* document viewer */
.viewer { background: #2c2c2c; overflow: hidden; padding: 18px 20px 0 12px; }
.sheet {
  min-height: 100%;
  background: #fff;
  border-right: 1px solid #777;
  padding: 54px 90px 60px;
  font: 15px/18px "Liberation Serif", serif;
  color: #000;
}
.doc-head { text-align: center; font-family: "Liberation Sans", sans-serif; }
h1, h2 { margin: 0; font-size: 15px; line-height: 18px; font-weight: bold; }
h2 { margin-top: 17px; }
.sheet p { margin: 0; }
.sheet .doc-head + p { margin-top: 32px; }
.sheet .intro { margin-top: 12px; }
.justified { text-align: justify; text-align-last: justify; }
.last { display: block; text-align-last: left; }
.sheet ul { margin: 0; padding: 0; list-style: none; }
.sheet li { position: relative; padding-left: 46px; }
.sheet li::before { position: absolute; left: 23px; }
.dots { display: flex; flex-direction: column; }
.dots li + li { margin-top: 1px; }
.dots li::before { content: ""; width: 6px; height: 6px; top: 7px; border-radius: 50%; background: #000; }
.dashes li::before { content: "-"; }
.sheet .request { margin-top: 33px; }
.sheet .note { margin-top: 28px; font-style: italic; }
mark { background: #ffc55e; color: inherit; padding: 1px 0 0; }
mark.green { background: #68c068; }

.splitter { display: flex; align-items: center; justify-content: center; }
.grip { width: 4px; height: 64px; border-radius: 2px; background: #7c7c7c; }

/* browser chrome */
.browser { display: flex; flex-direction: column; min-width: 0; background: #fff; }
.safari-bar { height: 52px; background: #303030; display: flex; align-items: center; padding: 0 19px 0 21px; }
.safari-bar svg { stroke: #a0a0a0; }
.safari-bar .cut { stroke: #333; }
.sb-side { padding-right: 7px; border-right: 1px solid #444; }
.sb-menu { margin: 0 23px 0 6px; }
.sb-back { margin-right: 24px; }
.safari-bar .sb-back svg { stroke: #5c5c5c; }
.address { flex: 1; height: 28px; margin: 0 15px 0 176px; padding: 0 4px 0 8px; display: flex; align-items: center; gap: 5px; border: 1px solid #484848; border-radius: 7px; background: #333; }
.safari-bar .address svg { stroke: #ccc; }
.host { flex: 1; display: flex; align-items: center; justify-content: center; gap: 6px; padding-right: 10px; margin-right: -10px; transform: none; color: #fff; font-weight: 500; font-size: 13px; }
.sb-home { margin-right: 21px; }
.sb-print { margin-right: 69px; }
.sb-down, .sb-clock { margin-right: 18px; }
.sb-share { margin-right: 22px; }
.sb-plus { margin-right: 21px; }
.tabs { height: 29px; display: grid; grid-template-columns: repeat(4, minmax(0, 1fr)); background: #000; border-bottom: 1px solid #000; }
.tab { position: relative; display: flex; align-items: center; justify-content: center; gap: 5px; padding: 0 2px 1px 0; border-top: 1px solid #000; border-left: 1px solid #444; background: #1a1a1a; color: #999; font-size: 11px; white-space: nowrap; overflow: hidden; }
.tab svg { stroke: none; }
.tab.active { background: #303030; border-color: #303030; color: #fff; font-weight: 500; }
.tab-close { position: absolute; left: 6px; color: #999; font-weight: 400; font-size: 12px; }

/* editor */
.app { position: relative; flex: 1; min-height: 0; display: flex; flex-direction: column; }
.banner { position: absolute; top: 0; left: 50%; transform: translateX(-50%); z-index: 2; width: 484px; height: 35px; padding: 0 26px 2px 24px; display: flex; align-items: center; justify-content: space-between; background: #ff602b; color: #fff; border-radius: 0 0 4px 4px; box-shadow: 0 2px 4px rgba(0, 0, 0, .5); font-weight: 500; }
.banner span { text-decoration: underline; text-underline-offset: 3px; }
.app-head { height: 64px; display: flex; align-items: center; padding: 0 8px 2px 14px; border-bottom: 1px solid #d7dade; }
.logo { gap: 6px; }
.logo svg:first-child { stroke: none; }
.titles { margin-left: 28px; display: flex; flex-direction: column; padding-top: 3px; }
.doc-title { height: 20px; display: flex; align-items: center; }
.doc-title strong { font-size: 18px; width: 20px; }
.dot { width: 9px; height: 9px; border-radius: 50%; background: #0073b8; margin: 0 7px 0 4px; }
.caret { flex: none; border: solid transparent; border-width: 7px 4px 0; border-top-color: currentColor; }
.caret.small { border-width: 5px 3px 0; }
.doc-title .caret { margin-left: 7px; }
.menu { height: 26px; display: flex; align-items: center; gap: 16px; }
.cloud { margin-left: 8px; }
.head-right { margin-left: auto; display: flex; align-items: center; }
.more-down { margin: 0 19px 0 21px; }
.rule { width: 1px; height: 24px; background: #d7dade; margin-right: 22px; }
.present { margin-right: 18px; }
.send { width: 32px; height: 32px; border-radius: 4px; background: #2d37b5; margin-right: 16px; }
.send svg { stroke: #fff; }
.avatar { width: 32px; height: 32px; border-radius: 50%; background: #ffdc4a; color: #000; font-weight: 700; }

.toolbar { height: 41px; display: flex; align-items: center; border-bottom: 1px solid #d7dade; }
.group { height: 100%; display: flex; align-items: center; border-right: 1px solid #d7dade; }
.g-undo { width: 80px; padding-left: 10px; gap: 15px; }
.g-paint { width: 51px; padding-left: 15px; }
.faded svg { stroke: #999; }
.g-text { width: 429px; padding-left: 18px; }
.font-name { font-family: "Liberation Sans", sans-serif; width: 124px; justify-content: space-between; margin-right: 19px; }
.font-size { gap: 7px; margin-right: 20px; }
.glyph { width: 18px; height: 22px; margin-right: 16px; font-size: 17px; }
.bold { font-weight: 800; }
.italic { font-family: "Liberation Mono", monospace; font-style: italic; font-size: 19px; }
.underline { text-decoration: underline; text-underline-offset: 3px; }
.colour { border-bottom: 4px solid #282c33; height: 30px; padding-top: 4px; }
.tt { margin: 0 0 0 16px; gap: 1px; }
.g-fill { width: 151px; padding-left: 12px; gap: 13px; }
.g-fill button:first-child { margin-right: -4px; }
.g-line { border: 0; padding-left: 21px; }
.line-style { gap: 7px; margin-right: 26px; }
.stroke { width: 30px; height: 3px; background: #999; }
.width { display: flex; align-items: center; margin-right: 16px; }
.width input { width: 35px; }
.more { flex-direction: column; margin-left: auto; margin-right: 16px; padding-top: 6px; font-size: 11px; line-height: 14px; }
.more b { font-size: 13px; }
.dock { margin-right: 11px; }

.workspace { flex: 1; min-height: 0; display: flex; }
.rail { width: 41px; flex: none; display: flex; flex-direction: column; align-items: center; gap: 4px; padding-top: 4px; border-right: 1px solid #d7dade; }
.rail button { width: 32px; height: 32px; border-radius: 4px; }
.rail .on { background: #d8d8fc; }
.rail .on svg { stroke: #2d37b5; }
.panel { width: 135px; flex: none; display: flex; flex-direction: column; border-right: 1px solid #d7dade; }
.panel-title { height: 40px; flex: none; display: flex; align-items: center; gap: 9px; padding: 1px 0 0 16px; border-bottom: 1px solid #c9cbd4; }
h3 { margin: 0; font-size: 18px; font-weight: 700; }
.scroller { position: relative; flex: 1; min-height: 0; overflow: hidden; }
.section { padding-bottom: 21px; border-bottom: 1px solid #c9cbd4; overflow: hidden; }
.section.first { padding-top: 3px; }
.section-head { height: 32px; margin: 16px 0 7px; padding-left: 9px; display: flex; align-items: center; }
.section-head button { margin-left: 16px; }
.section-head button + button { margin-left: 19px; }
.section-head button:last-child { margin-left: 25px; }
.tiles { display: grid; grid-template-columns: repeat(3, 33px); grid-auto-rows: 31px; padding-left: 18px; }
.tiles svg { width: 33px; height: 31px; stroke: #111; }
.tiles .heavy { stroke-width: 2; }
.link { color: #2d37b5; font-weight: 600; gap: 7px; height: 32px; width: 100%; margin-top: 8px; }
.link svg { stroke: #2d37b5; }
.ai { justify-content: flex-start; gap: 6px; }
.panel-foot { flex: none; border: solid #d7dade; border-width: 1px 0; padding: 12px 0 16px; }
.fan { margin: 0 auto; stroke: none; }
.more-shapes { width: 100%; height: 32px; border-radius: 4px; background: #2d37b5; color: #fff; font-weight: 600; }
.link.import { height: 45px; margin: 0; }
.thumb { position: absolute; border-radius: 3px; background: #c3c6ca; }
.v-panel { right: 2px; top: 216px; width: 6px; height: 282px; }

.canvas {
  position: relative; flex: 1; min-width: 0; overflow: hidden;
  background-image:
    linear-gradient(90deg, #d9d9d9 1px, transparent 1px),
    linear-gradient(#d9d9d9 1px, transparent 1px),
    linear-gradient(90deg, transparent 18px, #ececec 18px 19px, transparent 19px 37px, #ececec 37px 38px, transparent 38px 55px, #ececec 55px 56px, transparent 56px),
    linear-gradient(transparent 18px, #ececec 18px 19px, transparent 19px 37px, #ececec 37px 38px, transparent 38px 55px, #ececec 55px 56px, transparent 56px);
  background-size: 74px 74px;
  background-position: 72px 51px;
}
.diagram { position: absolute; inset: 0; stroke: #666; }
.edges .strong { stroke: #000; stroke-width: 1.5; }
.nodes ellipse { fill: #fff; }
.labels { fill: #000; stroke: none; font: 8px "Liberation Sans", sans-serif; text-anchor: middle; }
.roles { fill: #444a55; font-size: 10px; }
.v-canvas { right: 0; top: 292px; width: 6px; height: 277px; }
.h-canvas { left: 34%; right: 306px; bottom: 2px; height: 6px; }

.status { height: 33px; flex: none; display: flex; align-items: center; border-top: 1px solid #d7dade; }
.st-list { margin: 0 18px 0 13px; }
.st-grid { margin-right: 18px; }
.page { height: 28px; align-self: flex-start; padding: 4px 8px 0 7px; background: #eff0f3; border-radius: 0 0 3px 3px; }
.page.current { width: 85px; padding: 4px 8px 0; justify-content: space-between; margin-right: 4px; background: #66686c; color: #fff; font-weight: 500; }
.st-add { margin-left: 18px; }
.selected { height: 100%; margin-left: auto; padding: 0 14px 0 12px; gap: 7px; border-left: 1px solid #d7dade; }
.badge { width: 16px; height: 16px; margin: 0 2px 0 -2px; border-radius: 50%; background: #d8d8fc; color: #2d37b5; font-size: 10px; line-height: 16px; font-weight: 700; }
.cell { width: 33px; height: 100%; border-left: 1px solid #d7dade; }
.cell.wide { width: 41px; }
.zoom { width: 119px; height: 100%; padding: 0 9px; display: flex; align-items: center; justify-content: space-between; border-left: 1px solid #d7dade; }
```
